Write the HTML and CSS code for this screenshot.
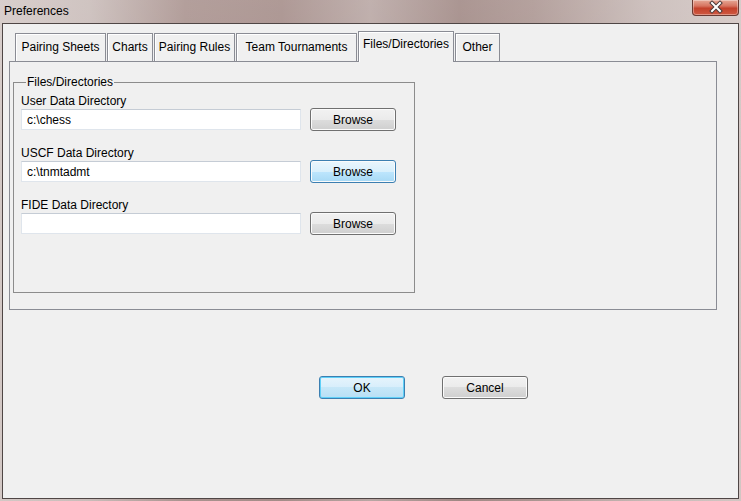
FILE: index.html
```html
<!DOCTYPE html>
<html lang="en">
<head>
    <meta charset="UTF-8">
    <title>Preferences</title>
    <link rel="stylesheet" href="styles.css">
</head>
<body>
    <div class="window">
        <div class="titlebar">
            <span class="title">Preferences</span>
            <div class="close-btn">
                <svg width="45" height="15" viewBox="0 0 45 15">
                    <path d="M19 3 L27 11 M27 3 L19 11" stroke="#4a3a3a" stroke-width="4" stroke-linecap="square"/>
                    <path d="M19 3 L27 11 M27 3 L19 11" stroke="#ffffff" stroke-width="2" stroke-linecap="square"/>
                </svg>
            </div>
        </div>

        <div class="client">
            <div class="tabs">
                <div class="tab tab-sheets">Pairing Sheets</div>
                <div class="tab tab-charts">Charts</div>
                <div class="tab tab-rules">Pairing Rules</div>
                <div class="tab tab-team">Team Tournaments</div>
                <div class="tab tab-files selected">Files/Directories</div>
                <div class="tab tab-other">Other</div>
            </div>

            <div class="tab-panel">
                <fieldset class="group">
                    <legend>Files/Directories</legend>
                    <div class="field">
                        <label>User Data Directory</label>
                        <div class="field-row">
                            <input class="text-input" type="text" value="c:\chess">
                            <button class="btn">Browse</button>
                        </div>
                    </div>
                    <div class="field">
                        <label>USCF Data Directory</label>
                        <div class="field-row">
                            <input class="text-input" type="text" value="c:\tnmtadmt">
                            <button class="btn btn-hot">Browse</button>
                        </div>
                    </div>
                    <div class="field">
                        <label>FIDE Data Directory</label>
                        <div class="field-row">
                            <input class="text-input" type="text" value="">
                            <button class="btn">Browse</button>
                        </div>
                    </div>
                </fieldset>
            </div>

            <div class="dialog-buttons">
                <button class="btn btn-default">OK</button>
                <button class="btn">Cancel</button>
            </div>
        </div>
    </div>
</body>
</html>
```

FILE: styles.css
```css
body {
    margin: 0;
    font-family: "Liberation Sans", Arial, sans-serif;
    font-size: 12px;
    color: #000;
    background-color: #a08b88;
}
.window {
    width: 741px;
    height: 501px;
    display: flex;
    flex-direction: column;
    background:
        linear-gradient(180deg, rgba(255,255,255,0.12), rgba(255,255,255,0) 40%),
        linear-gradient(90deg, #d3c8c5 0%, #c9bcb9 12%, #a9928e 25%, #a48c88 38%, #b8a6a3 50%, #a08884 62%, #ab9591 72%, #c8bab7 88%, #d2c6c3 100%);
}
.titlebar {
    height: 23px;
    display: flex;
    justify-content: space-between;
    align-items: flex-start;
}
.title {
    padding: 3px 0 0 4px;
    line-height: 16px;
    font-size: 12px;
}
.close-btn {
    width: 47px;
    height: 16px;
    margin-right: 2px;
    box-sizing: border-box;
    border: 1px solid #6a3a32;
    border-top: none;
    border-radius: 0 0 4px 4px;
    background: linear-gradient(180deg, #e6a896 0%, #d77460 40%, #c3412b 55%, #cf5a42 100%);
    box-shadow: inset 0 0 0 1px rgba(255,255,255,0.35);
}
.close-btn svg {
    display: block;
}
.client {
    flex: 1;
    margin: 0 2px 2px 2px;
    border: 1px solid #4f4645;
    background-color: #f0f0f0;
    padding-top: 7px;
}
.tabs {
    display: flex;
    align-items: flex-end;
    height: 30px;
    margin-left: 12px;
    position: relative;
    z-index: 1;
}
.tab {
    box-sizing: border-box;
    height: 28px;
    margin-right: 1px;
    padding-top: 6px;
    line-height: 14px;
    text-align: center;
    white-space: nowrap;
    background-color: #f0f0f0;
    border: 1px solid #8a8c94;
    border-bottom: none;
    box-shadow: inset 1px 1px 0 #ffffff;
}
.tab.selected {
    height: 31px;
    margin-bottom: -1px;
    padding-top: 5px;
}
.tab-sheets { width: 91px; }
.tab-charts { width: 46px; }
.tab-rules { width: 81px; }
.tab-team { width: 121px; }
.tab-files { width: 96px; }
.tab-other { width: 45px; }

.tab-panel {
    box-sizing: border-box;
    width: 708px;
    height: 249px;
    margin-left: 6px;
    border: 1px solid #8a8c94;
    padding: 13px 0 0 3px;
}
.group {
    box-sizing: border-box;
    width: 402px;
    height: 218px;
    margin: 0;
    padding: 5px 0 0 7px;
    border: 1px solid #8c8c8c;
}
.group legend {
    padding: 0 1px;
    margin-left: 5px;
    line-height: 14px;
}
.field {
    margin-bottom: 15px;
}
.field label {
    display: block;
    line-height: 14px;
}
.field-row {
    display: flex;
    align-items: center;
    height: 23px;
}
.text-input {
    box-sizing: border-box;
    width: 280px;
    height: 21px;
    margin: 0 9px 0 0;
    padding: 0 5px;
    font-family: "Liberation Sans", Arial, sans-serif;
    font-size: 12px;
    color: #000;
    background: #fff;
    border: 1px solid #dfe5ec;
    border-top-color: #c5ccd5;
    outline: none;
}
.btn {
    box-sizing: border-box;
    width: 86px;
    height: 23px;
    padding: 0;
    font-family: "Liberation Sans", Arial, sans-serif;
    font-size: 12px;
    color: #000;
    border: 1px solid #707070;
    border-radius: 3px;
    background: linear-gradient(180deg, #f2f2f2 0%, #ebebeb 50%, #dddddd 50%, #cfcfcf 100%);
    box-shadow: inset 0 0 0 1px #fbfbfb;
    cursor: pointer;
}
.btn-hot {
    border-color: #3c7fb1;
    background: linear-gradient(180deg, #eaf6fd 0%, #d9f0fc 50%, #bee6fd 50%, #a7d9f5 100%);
}
.btn-default {
    border-color: #3c7fb1;
    background: linear-gradient(180deg, #e6f4fc 0%, #d7eefb 50%, #c6e7f8 50%, #b7dff5 100%);
    box-shadow: inset 0 0 0 1px #5fd0f8;
}
.dialog-buttons {
    display: flex;
    margin: 66px 0 0 316px;
    gap: 37px;
}
```
